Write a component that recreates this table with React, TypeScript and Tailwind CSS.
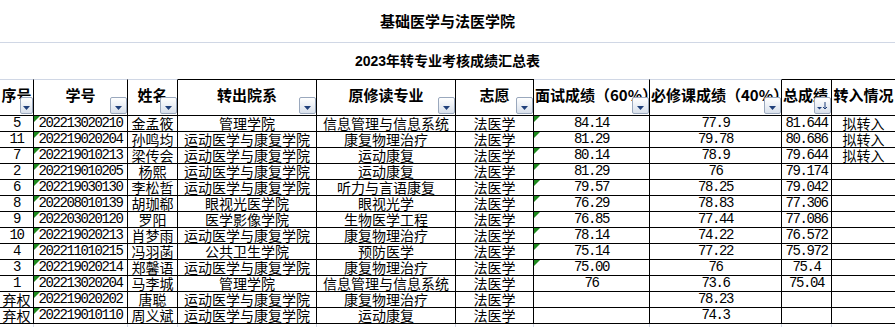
import React from "react";

type Row = {
  no: string;
  id: string;
  name: string;
  from: string;
  major: string;
  wish: string;
  interview: string;
  course: string;
  total: string;
  status: string;
  flag: boolean;
};

const rows: Row[] = [
  { no: "5", id: "202213020210", name: "金孟筱", from: "管理学院", major: "信息管理与信息系统", wish: "法医学", interview: "84.14", course: "77.9", total: "81.644", status: "拟转入", flag: true },
  { no: "11", id: "202219020204", name: "孙鸣均", from: "运动医学与康复学院", major: "康复物理治疗", wish: "法医学", interview: "81.29", course: "79.78", total: "80.686", status: "拟转入", flag: true },
  { no: "7", id: "202219010213", name: "梁传会", from: "运动医学与康复学院", major: "运动康复", wish: "法医学", interview: "80.14", course: "78.9", total: "79.644", status: "拟转入", flag: true },
  { no: "2", id: "202219010205", name: "杨熙", from: "运动医学与康复学院", major: "运动康复", wish: "法医学", interview: "81.29", course: "76", total: "79.174", status: "", flag: true },
  { no: "6", id: "202219030130", name: "李松哲", from: "运动医学与康复学院", major: "听力与言语康复", wish: "法医学", interview: "79.57", course: "78.25", total: "79.042", status: "", flag: true },
  { no: "8", id: "202208010139", name: "胡珈郗", from: "眼视光医学院", major: "眼视光学", wish: "法医学", interview: "76.29", course: "78.83", total: "77.306", status: "", flag: true },
  { no: "9", id: "202203020120", name: "罗阳", from: "医学影像学院", major: "生物医学工程", wish: "法医学", interview: "76.85", course: "77.44", total: "77.086", status: "", flag: true },
  { no: "10", id: "202219020213", name: "肖梦雨", from: "运动医学与康复学院", major: "康复物理治疗", wish: "法医学", interview: "78.14", course: "74.22", total: "76.572", status: "", flag: true },
  { no: "4", id: "202211010215", name: "冯羽菡", from: "公共卫生学院", major: "预防医学", wish: "法医学", interview: "75.14", course: "77.22", total: "75.972", status: "", flag: true },
  { no: "3", id: "202219020214", name: "郑馨语", from: "运动医学与康复学院", major: "康复物理治疗", wish: "法医学", interview: "75.00", course: "76", total: "75.4", status: "", flag: true },
  { no: "1", id: "202213020204", name: "马李城", from: "管理学院", major: "信息管理与信息系统", wish: "法医学", interview: "76", course: "73.6", total: "75.04", status: "", flag: false },
  { no: "弃权", id: "202219020202", name: "唐聪", from: "运动医学与康复学院", major: "康复物理治疗", wish: "法医学", interview: "", course: "78.23", total: "", status: "", flag: false },
  { no: "弃权", id: "202219010110", name: "周义斌", from: "运动医学与康复学院", major: "运动康复", wish: "法医学", interview: "", course: "74.3", total: "", status: "", flag: false },
];

const cjk = "font-['Noto_Sans_CJK_SC',sans-serif]";
const mono = "font-['Liberation_Mono',monospace] tracking-[-1.4px]";

function FilterBtn({ sort, narrow }: { sort?: boolean; narrow?: boolean }) {
  return (
    <span
      className={`absolute right-0 bottom-[1px] h-[17px] ${narrow ? "w-[13px]" : "w-[17px]"} rounded-[2px] border border-[#9aa8bd] bg-linear-to-b from-white to-[#d9e1ec] flex items-end justify-center pb-[3px]`}
    >
      {sort ? (
        <svg width="11" height="8" viewBox="0 0 11 8">
          <path d="M0 5h5l-2.5 2.5z" fill="#1f3f7a" />
          <path d="M8 0v7M6 5l2 2 2-2" stroke="#1f3f7a" strokeWidth="1" fill="none" />
        </svg>
      ) : (
        <svg width="7" height="4" viewBox="0 0 7 4">
          <path d="M0 0h7L3.5 4z" fill="#1f3f7a" />
        </svg>
      )}
    </span>
  );
}

function Head({ label, top, left, sort, noBtn, narrow, last }: { label: string; top: string; left?: boolean; sort?: boolean; noBtn?: boolean; narrow?: boolean; last?: boolean }) {
  return (
    <div
      className={`relative h-[37px] border-t border-b border-black ${top} ${last ? "" : "border-r"} overflow-hidden flex items-start pt-[6px] ${left ? "justify-start pl-px" : "justify-center"}`}
    >
      <span className={`${cjk} font-bold text-[15px] leading-[18px] whitespace-nowrap text-black`}>{label}</span>
      {!noBtn && <FilterBtn sort={sort} narrow={narrow} />}
    </div>
  );
}

function Cell({ children, num, flag, last }: { children?: React.ReactNode; num?: boolean; flag?: boolean; last?: boolean }) {
  return (
    <div
      className={`relative h-[16px] border-b border-black ${last ? "" : "border-r"} flex justify-center whitespace-nowrap text-black ${num ? `${mono} items-start text-[14px] leading-[15px]` : `${cjk} items-end text-[14px] leading-[15px]`}`}
    >
      {flag && <span className="absolute top-0 left-0 w-[6px] h-[6px] bg-[#1e8a1e] [clip-path:polygon(0_0,100%_0,0_100%)]" />}
      {children}
    </div>
  );
}

export default function App() {
  return (
    <div className="w-[895px] h-[327px] overflow-hidden bg-white">
      <div className="grid grid-cols-[34px_94px_50px_139px_139px_78px_116px_132px_50px_63px]">
        <div className={`col-span-10 h-[43px] border-b border-[#d0d7e5] flex items-center justify-center ${cjk} font-bold text-[15px] text-black`}>
          基础医学与法医学院
        </div>
        <div className={`col-span-10 h-[36px] flex items-center justify-center ${cjk} font-bold text-[14px] text-black`}>
          <span>
            <span className="font-['Liberation_Sans',sans-serif]">2023</span>年转专业考核成绩汇总表
          </span>
        </div>

        <Head label="序号" top="border-t-[#d0d7e5]" narrow />
        <Head label="学号" top="border-t-[#d0d7e5]" />
        <Head label="姓名" top="border-t-[#d0d7e5]" />
        <Head label="转出院系" top="border-t-black" />
        <Head label="原修读专业" top="border-t-black" />
        <Head label="志愿" top="border-t-black" />
        <Head label="面试成绩（60%）" top="border-t-[#d0d7e5]" left />
        <Head label="必修课成绩（40%）" top="border-t-[#d0d7e5]" left />
        <Head label="总成绩" top="border-t-black" left sort />
        <Head label="转入情况" top="border-t-black" noBtn last />

        {rows.map((r, i) => (
          <React.Fragment key={i}>
            <Cell num={r.no !== "弃权"}>{r.no}</Cell>
            <Cell num flag>{r.id}</Cell>
            <Cell>{r.name}</Cell>
            <Cell>{r.from}</Cell>
            <Cell>{r.major}</Cell>
            <Cell>{r.wish}</Cell>
            <Cell num flag={r.flag}>{r.interview}</Cell>
            <Cell num>{r.course}</Cell>
            <Cell num>{r.total}</Cell>
            <Cell last>{r.status}</Cell>
          </React.Fragment>
        ))}

        {Array.from({ length: 10 }).map((_, i) => (
          <div key={i} className={`h-[4px] ${i < 9 ? "border-r border-[#d0d7e5]" : ""}`} />
        ))}
      </div>
    </div>
  );
}
